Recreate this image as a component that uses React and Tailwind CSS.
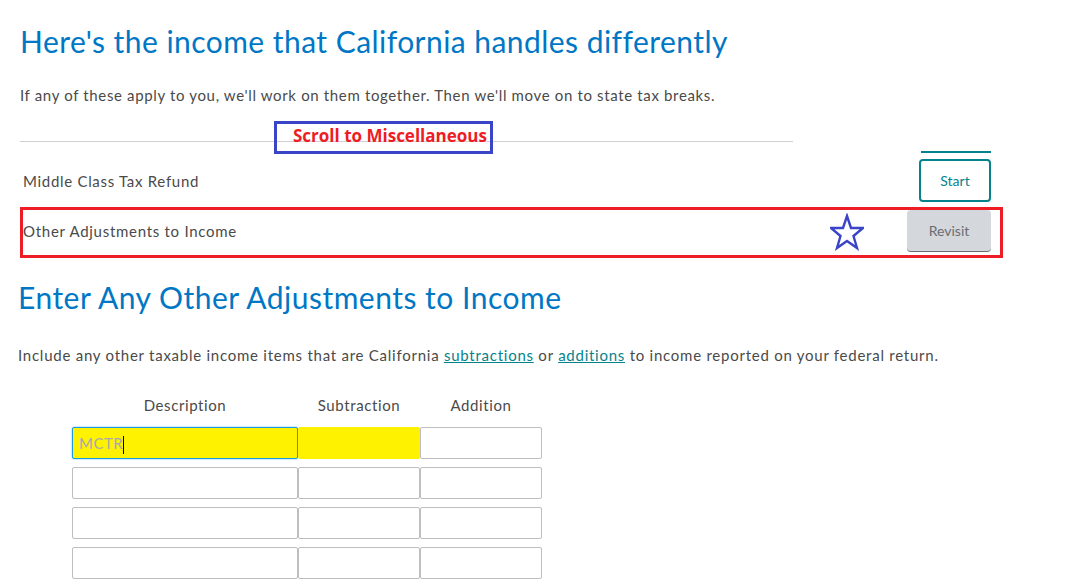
import React from "react";

const font = { fontFamily: "Lato, 'Open Sans', sans-serif" };

function Star() {
  return (
    <svg width="34" height="38" viewBox="0 0 34 38" className="absolute left-[830px] top-[213px]">
      <polygon
        points="17,3 21,15 33,15 23.5,23 27,35 17,28 7,35 10.5,23 1,15 13,15"
        fill="none"
        stroke="#3a44c6"
        strokeWidth="2.4"
        strokeLinejoin="miter"
      />
    </svg>
  );
}

function Cell({ w, yellow, focused, children }) {
  return (
    <div
      className={
        "h-[32px] rounded-[2px] border " +
        (focused
          ? "border-[#1a9be0] bg-[#fff200] shadow-[0_0_2px_#5ab8ef] "
          : yellow
          ? "border-[#fff200] bg-[#fff200] "
          : "border-[#bcbec2] bg-white ") +
        w
      }
    >
      {children}
    </div>
  );
}

export default function App() {
  return (
    <div className="relative w-[1066px] h-[583px] overflow-hidden bg-white text-[#393a3d]" style={font}>
      <div className="pl-[20px] pt-[22px]">
        <h1 className="text-[30px] leading-[38px] tracking-[0.45px] text-[#0077c5] font-normal">
          Here's the income that California handles differently
        </h1>
        <p className="mt-[25px] text-[15px] leading-[20px] tracking-[0.65px] text-[#4a4a4a]">
          If any of these apply to you, we'll work on them together. Then we'll move on to state tax breaks.
        </p>
        <div className="mt-[36px] w-[773px] h-px bg-[#cfd0d2]" />
        <div className="flex items-center w-[972px] h-[50px] mt-[14px] pl-[3px]">
          <span className="text-[15px] tracking-[0.7px] text-[#4a4a4a]">Middle Class Tax Refund</span>
          <div className="flex h-[43px] w-[72px] -translate-y-px items-center justify-center rounded-[4px] border-2 border-[#05838d] text-[14px] text-[#05838d] ml-auto mr-[1px]">
            Start
          </div>
        </div>
        <div className="flex items-center w-[972px] h-[50px] pl-[3px]">
          <span className="text-[15px] tracking-[0.72px] text-[#4a4a4a]">Other Adjustments to Income</span>
          <div className="ml-auto mr-[1px] flex h-[42px] w-[84px] items-center justify-center rounded-[4px] bg-[#d4d7dc] border-b border-[#6b6c72] text-[14px] text-[#6b6c72]">
            Revisit
          </div>
        </div>
      </div>

      <div className="pl-[18px] mt-[23px]">
        <h2 className="text-[30px] leading-[36px] tracking-[0.5px] text-[#0077c5]">Enter Any Other Adjustments to Income</h2>
        <p className="mt-[30px] text-[15px] leading-[20px] tracking-[0.75px] text-[#4a4a4a]">
          Include any other taxable income items that are California{" "}
          <span className="text-[#05838d] underline">subtractions</span> or{" "}
          <span className="text-[#05838d] underline">additions</span> to income reported on your federal return.
        </p>
        <div className="ml-[54px] mt-[29px]">
          <div className="flex text-[15px] tracking-[0.6px] text-[#4a4a4a] h-[22px] items-center">
            <div className="w-[226px] text-center">Description</div>
            <div className="w-[122px] text-center">Subtraction</div>
            <div className="w-[122px] text-center">Addition</div>
          </div>
          <div className="mt-[11px] flex flex-col gap-[8px]">
            <div className="flex">
              <Cell w="w-[226px]" focused>
                <span className="pl-[6px] text-[15px] tracking-[0.5px] leading-[30px] text-[#a7a9ac]">MCTR</span>
                <span className="inline-block w-px h-[18px] bg-black align-middle" />
              </Cell>
              <Cell w="w-[122px]" yellow />
              <Cell w="w-[122px]" />
            </div>
            {[0, 1, 2].map((i) => (
              <div className="flex" key={i}>
                <Cell w="w-[226px]" />
                <Cell w="w-[122px]" />
                <Cell w="w-[122px]" />
              </div>
            ))}
          </div>
        </div>
      </div>

      {/* annotations */}
      <div className="absolute left-[921px] top-[151px] w-[70px] h-[2px] bg-[#05838d]" />
      <div className="absolute left-[274px] top-[121px] w-[219px] h-[33px] border-[3px] border-[#3a44c6] bg-transparent">
        <span
          className="absolute left-[16px] top-[0px] text-[17px] font-bold text-[#ee1c24] leading-[24px]"
          style={{ fontFamily: "'Open Sans', sans-serif" }}
        >
          Scroll to Miscellaneous
        </span>
      </div>
      <div className="absolute left-[20px] top-[207px] w-[983px] h-[51px] border-[3px] border-[#ee1c24]" />
      <Star />
    </div>
  );
}
